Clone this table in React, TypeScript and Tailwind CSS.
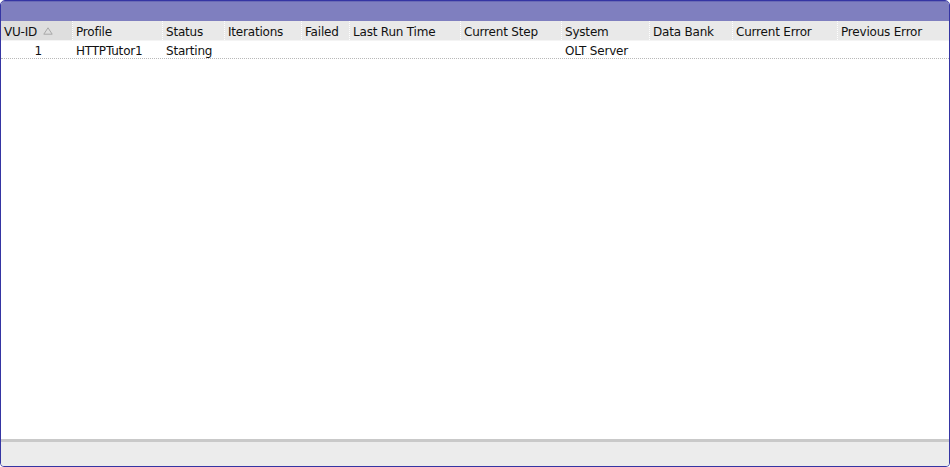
import React from "react";

const columns = [
  { label: "VU-ID", w: 72, sorted: true },
  { label: "Profile", w: 90 },
  { label: "Status", w: 62 },
  { label: "Iterations", w: 77 },
  { label: "Failed", w: 48 },
  { label: "Last Run Time", w: 111 },
  { label: "Current Step", w: 101 },
  { label: "System", w: 88 },
  { label: "Data Bank", w: 83 },
  { label: "Current Error", w: 105 },
  { label: "Previous Error", w: 111 },
];

const rows = [
  ["1", "HTTPTutor1", "Starting", "", "", "", "", "OLT Server", "", "", ""],
];

export default function App() {
  return (
    <div
      className="w-[950px] h-[467px] bg-white flex flex-col border border-[#3535a3] rounded-t-[5px] rounded-b-[4px] overflow-hidden text-[12px] text-[#111]"
      style={{ fontFamily: '"DejaVu Sans", Verdana, sans-serif' }}
    >
      <div className="h-[20px] shrink-0 bg-[#7f7fbf] border-t border-[#6a6ab5]" />
      <div className="flex h-[20px] shrink-0 bg-[#e9e9e9] border-b border-[#f4f4f4]">
        {columns.map((c, i) => (
          <div
            key={c.label}
            className={`flex items-center shrink-0 pl-[3px] pt-[2px] whitespace-nowrap tracking-[-0.2px] ${
              i < columns.length - 1 ? "border-r border-dotted border-white" : ""
            } ${c.sorted ? "bg-[#dedede]" : ""}`}
            style={{ width: c.w }}
          >
            <span>{c.label}</span>
            {c.sorted && (
              <svg width="10" height="8" viewBox="0 0 10 8" className="ml-[6px] mt-[-1px]">
                <path d="M5 0.8 L9.2 7.2 L0.8 7.2 Z" fill="none" stroke="#a8a8a8" strokeWidth="1" />
              </svg>
            )}
          </div>
        ))}
      </div>
      <div className="flex-1">
        {rows.map((r, ri) => (
          <div key={ri} className="flex h-[18px] border-b border-dotted border-[#b8b8b8]">
            {r.map((v, i) => (
              <div
                key={i}
                className={`flex items-center shrink-0 pt-[2px] whitespace-nowrap tracking-[-0.2px] ${
                  i === 0 ? "justify-end pr-[31px]" : "pl-[3px]"
                }`}
                style={{ width: columns[i].w }}
              >
                {v}
              </div>
            ))}
          </div>
        ))}
      </div>
      <div className="h-[3px] shrink-0 bg-[#c9c9c9]" />
      <div className="h-[24px] shrink-0 bg-[#ececec]" />
    </div>
  );
}
